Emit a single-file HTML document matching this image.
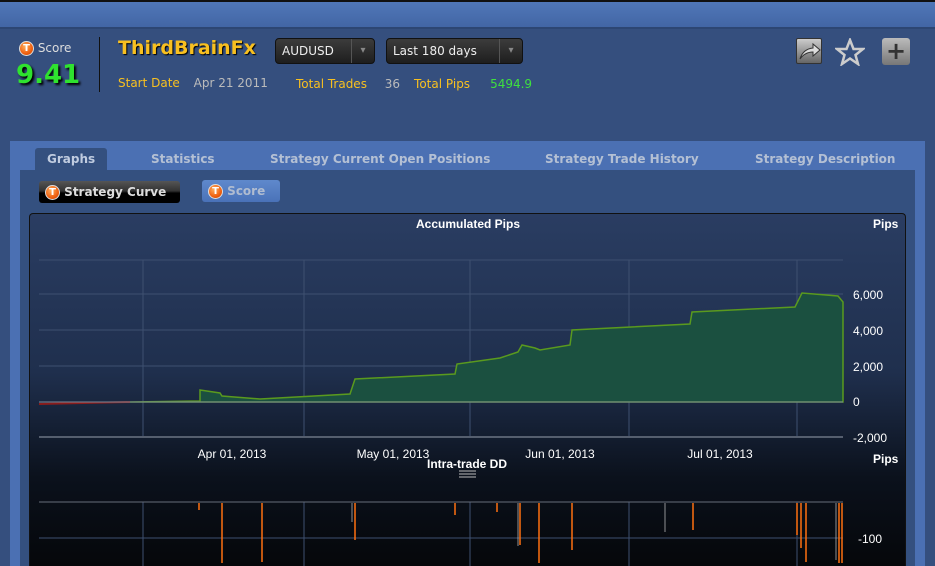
<!DOCTYPE html><html><head><meta charset="utf-8"><style>
*{margin:0;padding:0;box-sizing:border-box}
body{width:935px;height:566px;overflow:hidden;background:#354f7e;font-family:"DejaVu Sans","Liberation Sans",sans-serif;position:relative}
.a{position:absolute;white-space:nowrap}
.ti{display:inline-block;width:15px;height:15px;border-radius:50%;background:radial-gradient(circle at 40% 35%,#ffb060,#f06010 60%,#c04000);border:1px solid #ddd;color:#fff;font-size:10px;font-weight:bold;text-align:center;line-height:13px;vertical-align:middle}
.dd{background:linear-gradient(#3c3c3c,#1e1e1e);border:1px solid #111;border-radius:4px;color:#eee;font-size:12px;height:26px;line-height:24px;padding-left:6px}
.dd:after{content:"▾";position:absolute;right:0;top:0;width:22px;text-align:center;color:#888;font-size:10px;border-left:1px solid #555}
.tab{color:#b4c0d4;font-size:12px;font-weight:bold;top:152px}
</style></head><body>
<div class="a" style="left:0;top:0;width:935px;height:2px;background:#111"></div>
<div class="a" style="left:0;top:2px;width:935px;height:26px;background:linear-gradient(#5077b8,#4265a4)"></div>
<div class="a" style="left:0;top:27px;width:935px;height:2px;background:#2d4673"></div>
<div class="a" style="left:19px;top:41px;color:#ddd;font-size:12px"><span class="ti">T</span> Score</div>
<div class="a" style="left:16px;top:60px;color:#2fe22f;font-size:26px;font-weight:bold;text-shadow:2px 2px 2px #000">9.41</div>
<div class="a" style="left:99px;top:37px;width:1px;height:55px;background:#111"></div>
<div class="a" style="left:118px;top:37px;color:#f8c020;font-size:19px;font-weight:bold;text-shadow:1px 1px 1px #000">ThirdBrainFx</div>
<div class="a dd" style="left:275px;top:38px;width:100px">AUDUSD</div>
<div class="a dd" style="left:386px;top:38px;width:137px">Last 180 days</div>
<div class="a" style="left:118px;top:76px;font-size:12px;color:#f8c020">Start Date <span style="color:#bbb;margin-left:10px">Apr 21 2011</span></div>
<div class="a" style="left:296px;top:77px;font-size:12px;color:#f8c020">Total Trades <span style="color:#bbb;margin-left:14px">36</span><span style="margin-left:14px">Total Pips</span><span style="color:#3ee03e;margin-left:20px">5494.9</span></div>
<div class="a" style="left:796px;top:38px;width:26px;height:26px;background:linear-gradient(#ccc,#666);border:1px solid #333;border-radius:2px"><svg width="24" height="24"><path d="M3 20 Q6 10 16 9 L16 5 L23 11 L16 17 L16 13 Q8 13 3 20Z" fill="#ddd" stroke="#333"/></svg></div>
<svg class="a" style="left:835px;top:38px" width="30" height="28"><path d="M15 2 L18.5 11 L28 11 L20.5 17 L23 26 L15 20.5 L7 26 L9.5 17 L2 11 L11.5 11Z" fill="none" stroke="#ccc" stroke-width="2.5"/></svg>
<div class="a" style="left:882px;top:38px;width:28px;height:27px;background:linear-gradient(#bbb,#777);border-radius:3px;color:#333;font-size:24px;font-weight:bold;text-align:center;line-height:26px">+</div>
<div class="a" style="left:10px;top:141px;width:915px;height:425px;background:#4b70b3"></div>
<div class="a" style="left:35px;top:148px;width:72px;height:24px;background:#34507f;border-radius:3px 3px 0 0"></div>
<div class="a" style="left:20px;top:170px;width:895px;height:396px;background:#34507f"></div>
<div class="a tab" style="left:47px;color:#c0cce0">Graphs</div>
<div class="a tab" style="left:151px">Statistics</div>
<div class="a tab" style="left:270px">Strategy Current Open Positions</div>
<div class="a tab" style="left:545px">Strategy Trade History</div>
<div class="a tab" style="left:755px">Strategy Description</div>
<div class="a" style="left:39px;top:181px;width:141px;height:22px;background:linear-gradient(#555 0,#333 45%,#000 55%,#000);border-radius:3px;color:#ddd;font-size:12px;font-weight:bold;line-height:22px;padding-left:6px"><span class="ti">T</span> Strategy Curve</div>
<div class="a" style="left:202px;top:180px;width:78px;height:22px;background:linear-gradient(#5f89cc,#4a72b8);border-radius:3px;color:#b0bcd0;font-size:12px;font-weight:bold;line-height:22px;padding-left:6px"><span class="ti">T</span> Score</div>
<div class="a" style="left:29px;top:213px;width:877px;height:353px;border:1px solid #111;border-bottom:none;border-radius:4px 4px 0 0;background:linear-gradient(#2a3d62 0,#1f2f4d 45%,#0b111c 75%,#05070a)"></div>
<svg class="a" style="left:0;top:0" width="935" height="566" font-family="Liberation Sans,sans-serif">
<g stroke="#3e5070" stroke-width="1">
<line x1="39" y1="260" x2="843" y2="260"/><line x1="39" y1="294" x2="843" y2="294"/><line x1="39" y1="330" x2="843" y2="330"/><line x1="39" y1="366" x2="843" y2="366"/>
<line x1="143" y1="260" x2="143" y2="437"/><line x1="304" y1="260" x2="304" y2="437"/><line x1="470" y1="260" x2="470" y2="437"/><line x1="629" y1="260" x2="629" y2="437"/><line x1="797" y1="260" x2="797" y2="437"/>
<line x1="143" y1="502" x2="143" y2="566"/><line x1="304" y1="502" x2="304" y2="566"/><line x1="470" y1="502" x2="470" y2="566"/><line x1="629" y1="502" x2="629" y2="566"/><line x1="797" y1="502" x2="797" y2="566"/>
<line x1="39" y1="538" x2="843" y2="538"/>
</g>
<path d="M130 402 L200 401 L200 390 L220 393 L222 396 L260 399 L350 394 L355 379 L455 374 L457 364 L500 358 L518 352 L522 345 L535 348 L540 350 L570 345 L572 330 L690 324 L692 312 L795 307 L802 293 L838 296 L843 302 L843 402Z" fill="#1b5040" stroke="#5a9a1e" stroke-width="1.5"/>
<path d="M39 404 L130 402" stroke="#8a1c1c" stroke-width="2"/>
<line x1="39" y1="402" x2="843" y2="402" stroke="#7a8a9a"/>
<line x1="39" y1="437" x2="843" y2="437" stroke="#555e6e" stroke-width="2"/>
<line x1="39" y1="502" x2="843" y2="502" stroke="#666e7a"/>
<g stroke="#ff7010" stroke-width="1.5">
<line x1="199" y1="503" x2="199" y2="510"/><line x1="222" y1="503" x2="222" y2="563"/><line x1="262" y1="503" x2="262" y2="562"/><line x1="355" y1="503" x2="355" y2="540"/><line x1="455" y1="503" x2="455" y2="515"/><line x1="497" y1="503" x2="497" y2="512"/><line x1="539" y1="503" x2="539" y2="563"/><line x1="572" y1="503" x2="572" y2="550"/><line x1="520" y1="503" x2="520" y2="545"/><line x1="693" y1="503" x2="693" y2="530"/><line x1="797" y1="503" x2="797" y2="535"/><line x1="801" y1="503" x2="801" y2="548"/><line x1="806" y1="503" x2="806" y2="562"/><line x1="839" y1="503" x2="839" y2="563"/><line x1="842" y1="503" x2="842" y2="563"/>
</g>
<g stroke="#ccc" stroke-width="0.7"><line x1="352" y1="503" x2="352" y2="522"/><line x1="518" y1="503" x2="518" y2="546"/><line x1="665" y1="503" x2="665" y2="532"/><line x1="836" y1="503" x2="836" y2="560"/></g>
<g fill="#fff" font-size="12">
<text x="468" y="228" text-anchor="middle" font-weight="bold">Accumulated Pips</text>
<text x="873" y="228" font-weight="bold">Pips</text>
<text x="853" y="299">6,000</text><text x="853" y="335">4,000</text><text x="853" y="371">2,000</text><text x="853" y="406">0</text><text x="853" y="442">-2,000</text>
<text x="232" y="458" text-anchor="middle">Apr 01, 2013</text><text x="393" y="458" text-anchor="middle">May 01, 2013</text><text x="560" y="458" text-anchor="middle">Jun 01, 2013</text><text x="720" y="458" text-anchor="middle">Jul 01, 2013</text>
<text x="467" y="468" text-anchor="middle" font-weight="bold">Intra-trade DD</text>
<text x="873" y="463" font-weight="bold">Pips</text>
<text x="858" y="543">-100</text>
</g>
<g stroke="#bbb"><line x1="459" y1="471" x2="476" y2="471"/><line x1="459" y1="474" x2="476" y2="474"/><line x1="459" y1="477" x2="476" y2="477"/></g>
</svg>
</body></html>
